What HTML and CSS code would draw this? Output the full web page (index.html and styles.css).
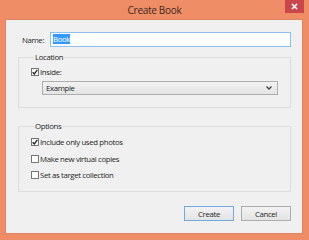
FILE: index.html
```html
<!DOCTYPE html>
<html>
<head>
  <meta charset="utf-8">
  <title>Create Book</title>
  <link rel="stylesheet" href="styles.css">
</head>
<body>
  <div class="window">
    <div class="titlebar">
      <div class="title">Create Book</div>
      <div class="close">
        <svg width="7" height="7" viewBox="0 0 7 7"><path d="M1 1 L6 6 M6 1 L1 6" stroke="#fff" stroke-width="1.6"/></svg>
      </div>
    </div>

    <div class="client">
      <div class="name-row">
        <label class="name-label">Name:</label>
        <div class="textbox"><span class="selected">Book</span></div>
      </div>

      <fieldset class="group location">
        <legend>Location</legend>
        <div class="check-row">
          <span class="checkbox checked">
            <svg width="6" height="6" viewBox="0 0 6 6"><path d="M0.6 3.2 L2.3 4.9 L5.4 0.8" fill="none" stroke="#222" stroke-width="1.3"/></svg>
          </span>
          <span>Inside:</span>
        </div>
        <div class="dropdown">
          <span>Example</span>
          <svg width="6" height="4" viewBox="0 0 6 4"><path d="M0.5 0.5 L3 3 L5.5 0.5" fill="none" stroke="#444" stroke-width="1.3"/></svg>
        </div>
      </fieldset>

      <fieldset class="group options">
        <legend>Options</legend>
        <div class="check-row">
          <span class="checkbox checked">
            <svg width="6" height="6" viewBox="0 0 6 6"><path d="M0.6 3.2 L2.3 4.9 L5.4 0.8" fill="none" stroke="#222" stroke-width="1.3"/></svg>
          </span>
          <span>Include only used photos</span>
        </div>
        <div class="check-row">
          <span class="checkbox"></span>
          <span>Make new virtual copies</span>
        </div>
        <div class="check-row">
          <span class="checkbox"></span>
          <span>Set as target collection</span>
        </div>
      </fieldset>

      <div class="buttons">
        <button class="btn default">Create</button>
        <button class="btn">Cancel</button>
      </div>
    </div>
  </div>
</body>
</html>
```

FILE: styles.css
```css
* {
  margin: 0;
  padding: 0;
  box-sizing: border-box;
}

body {
  font-family: "Open Sans", "Noto Sans", sans-serif;
  font-size: 7.8px;
  color: #1e1e1e;
  background: #ee8d66;
}

.window {
  width: 309px;
  height: 240px;
  display: flex;
  flex-direction: column;
  background: #ee8d66;
}

.titlebar {
  height: 19px;
  display: grid;
  grid-template-columns: 1fr auto 1fr;
  align-items: start;
}

.title {
  grid-column: 2;
  font-size: 10px;
  letter-spacing: -0.3px;
  color: #3a2a24;
  line-height: 20px;
}

.close {
  grid-column: 3;
  justify-self: end;
  width: 19px;
  height: 13px;
  margin-right: 5px;
  background: #c9474c;
  display: flex;
  align-items: center;
  justify-content: center;
}

.client {
  flex: 1;
  margin: 0 6px 6px 5px;
  background: #f0f0f0;
  border: 1px solid #e08360;
  padding: 12px 11px 0 12px;
  display: flex;
  flex-direction: column;
  letter-spacing: -0.35px;
}

.name-row {
  display: flex;
  align-items: center;
  height: 15px;
}

.name-label {
  width: 32px;
  padding-left: 4px;
}

.textbox {
  flex: 1;
  height: 15px;
  background: #fff;
  border: 1px solid #8fbfef;
  padding: 1px 2px;
  line-height: 11px;
}

.selected {
  background: #3399ff;
  color: #fff;
}

.group {
  border: 1px solid #dcdcdc;
  min-width: 0;
}

.group legend {
  margin-left: 3px;
  padding: 0 1px;
  line-height: 8px;
}

.location {
  margin-top: 6px;
  height: 55px;
  padding: 7px 12px 0 12px;
}

.options {
  margin-top: 14px;
  height: 70px;
  padding: 8px 12px 0 12px;
}

.check-row {
  display: flex;
  align-items: center;
  gap: 1px;
  height: 8px;
}

.options .check-row + .check-row {
  margin-top: 8.5px;
}

.checkbox {
  width: 8px;
  height: 8px;
  background: #fff;
  border: 1px solid #767676;
  display: flex;
  align-items: center;
  justify-content: center;
}

.dropdown {
  margin-top: 5px;
  margin-left: 11px;
  height: 14px;
  border: 1px solid #adadad;
  background: linear-gradient(#f2f2f2, #e4e4e4);
  display: flex;
  align-items: center;
  justify-content: space-between;
  padding: 0 5px 0 3px;
}

.buttons {
  margin-top: 14px;
  display: flex;
  justify-content: flex-end;
  gap: 7px;
}

.btn {
  width: 50px;
  height: 15px;
  font-family: inherit;
  font-size: 7.8px;
  letter-spacing: -0.35px;
  color: #1e1e1e;
  border: 1px solid #adadad;
  background: linear-gradient(#f2f2f2, #e4e4e4);
}

.btn.default {
  border-color: #6fa9e0;
}
```
